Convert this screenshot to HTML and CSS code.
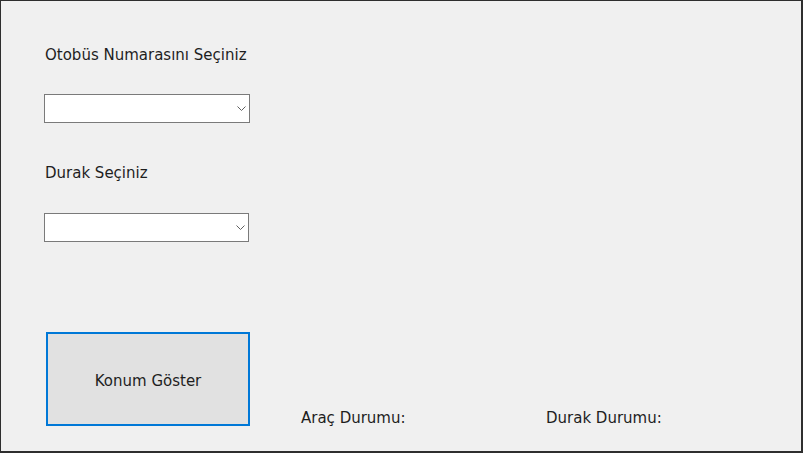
FILE: index.html
```html
<!DOCTYPE html>
<html lang="tr">
<head>
<meta charset="utf-8">
<title>Konum</title>
<link rel="stylesheet" href="styles.css">
</head>
<body>
<div class="window">
  <div class="label label-bus">Otobüs Numarasını Seçiniz</div>
  <div class="combo combo-bus">
    <svg class="chevron" width="9" height="5" viewBox="0 0 9 5"><path d="M0.5 0.5 L4.5 4.5 L8.5 0.5" fill="none" stroke="#606060" stroke-width="1"/></svg>
  </div>
  <div class="label label-stop">Durak Seçiniz</div>
  <div class="combo combo-stop">
    <svg class="chevron" width="9" height="5" viewBox="0 0 9 5"><path d="M0.5 0.5 L4.5 4.5 L8.5 0.5" fill="none" stroke="#606060" stroke-width="1"/></svg>
  </div>
  <div class="bottom">
    <button class="btn">Konum Göster</button>
    <div class="status status-vehicle">Araç Durumu:</div>
    <div class="status status-stop">Durak Durumu:</div>
  </div>
</div>
</body>
</html>
```
FILE: styles.css
```css
html, body {
  margin: 0;
  padding: 0;
  background: #2a2a2a;
}
.window {
  width: 803px;
  height: 453px;
  box-sizing: border-box;
  border-style: solid;
  border-color: #2e2e2e;
  border-width: 1px 2px 2px 1px;
  background: #f0f0f0;
  padding: 0 0 0 43px;
  font-family: "DejaVu Sans", "Lato", sans-serif;
  font-size: 15px;
  color: #1e1e1e;
}
.label {
  height: 18px;
  line-height: 18px;
  padding-left: 1px;
}
.label-bus { margin-top: 45px; }
.combo {
  position: relative;
  box-sizing: border-box;
  width: 206px;
  height: 29px;
  background: #ffffff;
  border: 1px solid #7a7a7a;
}
.combo-bus { margin-top: 30px; }
.label-stop { margin-top: 41px; }
.combo-stop { margin-top: 31px; width: 205px; }
.chevron {
  position: absolute;
  right: 3px;
  top: 11px;
}
.bottom {
  display: flex;
  align-items: flex-end;
  margin-top: 90px;
}
.btn {
  box-sizing: border-box;
  width: 204px;
  height: 94px;
  margin-left: 2px;
  background: #e1e1e1;
  border: 2px solid #0078d7;
  font-family: inherit;
  font-size: 15px;
  color: #1e1e1e;
  padding: 3px 0 0 0;
}
.status {
  line-height: 18px;
  margin-bottom: -1px;
}
.status-vehicle { margin-left: 51px; width: 245px; }
```
